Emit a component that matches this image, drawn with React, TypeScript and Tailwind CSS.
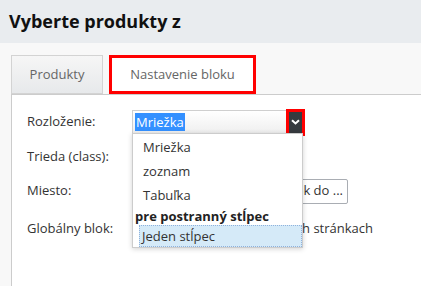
const options = ["Mriežka", "zoznam", "Tabuľka"];

function Chevron() {
  return (
    <svg width="9" height="6" viewBox="0 0 9 6" fill="none">
      <path d="M1 1.2 4.5 4.5 8 1.2" stroke="#fff" strokeWidth="2" />
    </svg>
  );
}

function LayoutSelect() {
  return (
    <div className="relative flex items-center">
      <div className="flex h-[24px] w-[155px] items-center border border-[#cfcfcf] bg-gradient-to-b from-white to-[#efefef] pl-[2px]">
        <span className="bg-[#3390ff] px-[1px] text-[13px] leading-[18px] text-white">Mriežka</span>
      </div>
      <div className="-ml-[1px] flex h-[27px] w-[19px] items-center justify-center border-[3px] border-[#ff0000] bg-[#363b3f]">
        <Chevron />
      </div>
      {/* open list */}
      <ul className="absolute top-[24px] left-0 z-10 h-[115px] w-[171px] border border-[#cccccc] bg-white pt-[1px] text-[13px] text-[#333] shadow-[0_1px_5px_rgba(0,0,0,0.18)]">
        {options.map((o) => (
          <li key={o} className="h-[24px] pl-[10px] leading-[24px]">
            {o}
          </li>
        ))}
        <li className="h-[18px] pl-[2px] leading-[18px] font-bold text-[#222]">pre postranný stĺpec</li>
        <li className="ml-[6px] h-[22px] border border-dotted border-[#8fb2dd] bg-[#d5eaf8] pl-[2px] leading-[20px]">
          Jeden stĺpec
        </li>
      </ul>
    </div>
  );
}

export default function App() {
  return (
    <div className="flex h-[286px] w-[421px] flex-col overflow-hidden bg-[#f8f8f8] font-['Open_Sans',sans-serif] text-[#333]">
      <header className="flex h-[43px] shrink-0 items-center bg-[#e9ecef] pl-[9px]">
        <h1 className="text-[18px] font-bold text-[#111]">Vyberte produkty z</h1>
      </header>

      <nav className="mt-[12px] flex h-[40px] shrink-0 pl-[11px] text-[13px] text-[#666]">
        <div className="flex h-[39px] w-[92px] items-center justify-center border border-[#d3d3d3] bg-gradient-to-b from-[#f6f6f6] to-[#e7e9eb]">
          Produkty
        </div>
        <div className="ml-[6px] flex h-[39px] w-[147px] items-center justify-center border-[3px] border-[#ff0000] bg-white">
          Nastavenie bloku
        </div>
      </nav>

      <section className="-mt-[1px] ml-[11px] flex-1 border-t border-l border-[#cccccc] bg-white pt-[15px] pl-[15px] text-[13px]">
        <div className="flex h-[24px] items-center">
          <label className="w-[105px]">Rozloženie:</label>
          <LayoutSelect />
        </div>
        <div className="mt-[11px] flex h-[24px] items-center">
          <label className="w-[105px]">Trieda (class):</label>
          <input className="h-[24px] w-[155px] border border-[#ccc]" />
        </div>
        <div className="mt-[10px] flex h-[24px] items-center">
          <label className="w-[105px]">Miesto:</label>
          <button className="flex h-[25px] w-[216px] items-center justify-end rounded-[2px] border border-[#a9adb3] bg-white pr-[4px] text-[13px] text-[#333]">
            Vybrať blok do ...
          </button>
        </div>
        <div className="mt-[14px] flex h-[24px] items-center">
          <label className="w-[105px]">Globálny blok:</label>
          <div className="flex w-[241px] items-center justify-between">
            <input type="checkbox" />
            <span>Zobraziť na všetkých stránkach</span>
          </div>
        </div>
      </section>
    </div>
  );
}
